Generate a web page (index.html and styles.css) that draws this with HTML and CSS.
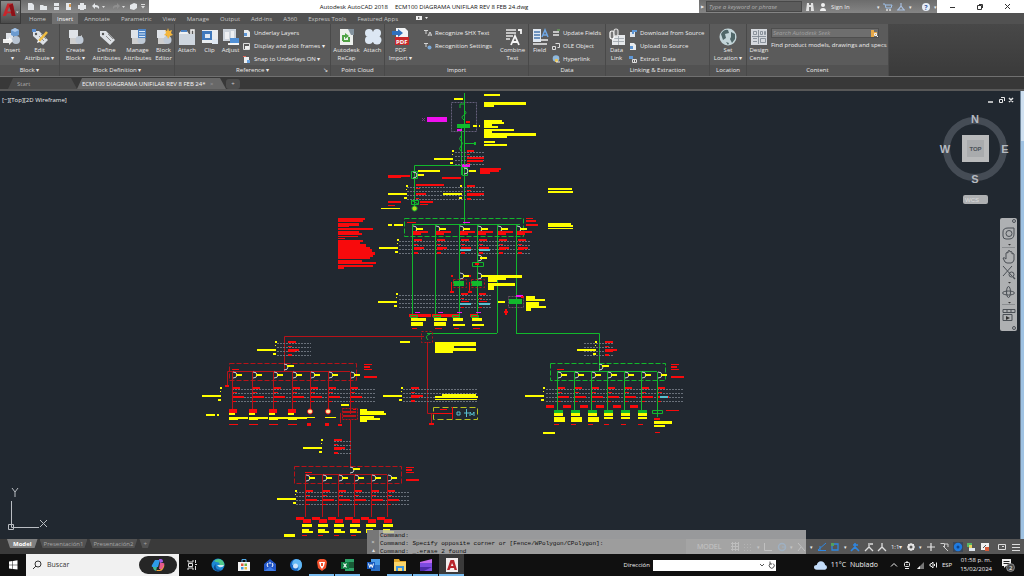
FILE: index.html
```html
<!DOCTYPE html>
<html lang="es">
<head>
<meta charset="utf-8">
<title>Autodesk AutoCAD 2018 - ECM100 DIAGRAMA UNIFILAR REV 8 FEB 24.dwg</title>
<link rel="stylesheet" href="styles.css">
</head>
<body>
<svg class="defs" aria-hidden="true">
  <symbol id="i-insert" viewBox="0 0 18 18"><path fill="#dfe3e8" d="M3 5h7v7H3z"/><path fill="#6b9bd0" d="M8 2l4-2 4 2v5l-4 2-4-2z"/><path fill="#a9c6e8" d="M8 2l4 2 4-2-4-2z"/><circle cx="13" cy="12" r="4" fill="#b9c4d2"/><path fill="#fff" d="M0 11h6V9l4 4-4 4v-2H0z" opacity=".9"/></symbol>
  <symbol id="i-tag" viewBox="0 0 18 18"><path fill="#dde1e6" d="M2 3l6 0 9 9-5 5L2 8z"/><circle cx="5" cy="6" r="1.2" fill="#555"/><path stroke="#777" stroke-width=".8" d="M8 8l5 5M10 6l5 5"/></symbol>
  <symbol id="i-edit" viewBox="0 0 18 18"><use href="#i-tag"/><path stroke="#f0bd42" stroke-width="2.6" d="M16 4l-8 9"/><path fill="#fff" d="M7 12l2 2-3 1z"/><path fill="#5b8ed0" d="M1 1h4v3H1z"/></symbol>
  <symbol id="i-block" viewBox="0 0 18 18"><path fill="#dfe3e8" d="M2 2h9v8H2z"/><path fill="#fff" d="M3 10h8l4-3v6l-4 3H3z" opacity=".7"/><circle cx="12.500" cy="12" r="4" fill="#c0cad6"/></symbol>
  <symbol id="i-manage" viewBox="0 0 18 18"><use href="#i-block"/><path fill="#4d83c4" d="M9 1h8v9H9z"/><path stroke="#dbe9f8" d="M10 3.500h6M10 6h6M10 8.500h6"/></symbol>
  <symbol id="i-editor" viewBox="0 0 18 18"><use href="#i-block"/><path fill="#f4b63d" d="M13 0l1 3 3-1-1 3 2 2-3 1-2 3-1-3-3-1 2-2-1-3 2 1z"/></symbol>
  <symbol id="i-attach" viewBox="0 0 18 18"><path fill="#ced6df" d="M1 6h16v11H1z"/><path fill="#eff1f3" d="M3 3h6l2 3H1V5z"/><path fill="#4d83c4" d="M3 2h6v2H3z"/><path stroke="#f4f4f4" stroke-width="1.500" fill="none" d="M13 6V2h3v4"/></symbol>
  <symbol id="i-clip" viewBox="0 0 18 18"><path fill="#e9edf1" d="M1 2h16v13H1z"/><path fill="#3f79bd" d="M1 3h10v9H1z"/><path fill="#dfe8f2" d="M4 6h5v4H4zM11 11h6v5h-6z"/></symbol>
  <symbol id="i-adjust" viewBox="0 0 18 18"><path fill="#cdd4dc" d="M1 1h13v12H1z"/><path fill="#eef0f3" d="M3 4h4v7H3zM9 3h3v8H9z"/><path fill="#5190d6" d="M8 10h9v5H8z"/><path fill="#f4f4f4" d="M6 15h11v2H6z"/></symbol>
  <symbol id="i-recap" viewBox="0 0 18 18"><path fill="#edf0ed" d="M2 1h9l4 4v12H2z"/><path fill="#83929d" d="M10 1h6v6h-3z"/><path fill="none" stroke="#51a345" stroke-width="2" d="M5 13h6V9M5 13V8h3"/><path fill="#51a345" d="M7 5l4 3-4 3z"/></symbol>
  <symbol id="i-cloud" viewBox="0 0 18 18"><g fill="#dce7f3"><circle cx="5" cy="5" r="4"/><circle cx="13" cy="5" r="4"/><circle cx="5" cy="12" r="4"/><circle cx="13" cy="12" r="4.500"/><path d="M4 4h10v10H4z"/></g></symbol>
  <symbol id="i-pdf" viewBox="0 0 18 18"><path fill="#f1f3f5" d="M4 0h9l3 3v9H4z"/><path fill="#c8282a" d="M3 9h14v8H3z"/><path fill="#2f70bd" d="M0 3h6V1l5 4-5 4V7H0z"/><text x="4" y="15.500" font-size="6" font-weight="700" fill="#fff">PDF</text></symbol>
  <symbol id="i-combine" viewBox="0 0 18 18"><path stroke="#e7e7e7" stroke-width="1.600" d="M2 2h10M2 5h10M2 8h7M2 11h4"/><path stroke="#f5f5f5" stroke-width="1.800" fill="none" d="M7 17l4-9 4 9M8.500 14h5M14 2h3v4"/></symbol>
  <symbol id="i-field" viewBox="0 0 18 18"><path fill="#e1e9f2" d="M2 1h8v13H2z"/><path stroke="#4877ad" stroke-width="1.400" d="M3 4h6M3 7h6M3 10h6"/><path stroke="#6fa8e6" stroke-width="1.500" fill="none" d="M11 9l3-7 3 7M12 7h4"/><path stroke="#eee" stroke-width="1.500" d="M2 16h14M10 12h7"/></symbol>
  <symbol id="i-link" viewBox="0 0 18 18"><path fill="#e6e9ec" d="M4 7h13v10H4z"/><path stroke="#9aa2aa" stroke-width=".8" d="M5 10.500h11M5 13.500h11M10.500 8v9"/><rect x="2" y="3" width="4" height="8" rx="2" fill="#777" stroke="#fff" stroke-width="1.200"/><rect x="6" y="1" width="4" height="7" rx="2" fill="#777" stroke="#ddd" stroke-width="1.200"/></symbol>
  <symbol id="i-globe" viewBox="0 0 18 18"><circle cx="9" cy="9" r="8.500" fill="#c3d5d9"/><path fill="#4f6668" d="M2 6q3-5 7-4l1 3-4 1 1 4-3 2zM12 4l4 2v5l-3 4-2-4 1-2zM7 14l3 1-1 2z"/></symbol>
  <symbol id="i-center" viewBox="0 0 18 18"><path fill="#d5d9de" d="M1 1h16v16H1z"/><path fill="none" stroke="#77818b" stroke-width=".8" d="M3.500 3.500h3v3h-3zM8.500 2v14M10.500 3.500h2v3h-2zM14.500 3.500h1v3h-1zM3 10.500h4M3 13.500h4M10.500 10.500h5v4h-5zM2 8.500h14"/></symbol>
  <symbol id="s-page" viewBox="0 0 8 8"><path fill="#e8ebee" d="M1 1h4l2 2v5H1z"/><path fill="#5d96d6" d="M1 4h3v3H1z"/></symbol>
  <symbol id="s-frame" viewBox="0 0 8 8"><path fill="none" stroke="#dedede" d="M.5 1.500h6v6h-6z"/><path fill="#eee" d="M2 4h4v3H2z"/></symbol>
  <symbol id="s-snap" viewBox="0 0 8 8"><path fill="#eceff1" d="M1 2h5v6H1z"/><path fill="#6aa3e0" d="M4 5h3v3H4z"/><path stroke="#e36a5c" d="M0 1.500h3"/></symbol>
  <symbol id="s-shx" viewBox="0 0 8 8"><path fill="none" stroke="#d4d4d4" d="M0 1.500h4M2 2v3M4 7l2-4 2 4M5 6h2"/></symbol>
  <symbol id="s-gearpage" viewBox="0 0 8 8"><path fill="none" stroke="#d4d4d4" d="M0 1.500h4M2 2v3"/><circle cx="5.500" cy="5.500" r="2" fill="#7aa9d9"/></symbol>
  <symbol id="s-lines" viewBox="0 0 8 8"><path stroke="#e8e8e8" stroke-width="1.300" d="M1 3h6M1 6h6"/><path stroke="#6ebd5b" d="M5 1h3"/></symbol>
  <symbol id="s-ole" viewBox="0 0 8 8"><path fill="none" stroke="#ddd" d="M.5 4.500h3v3h-3zM3.500 1.500h4v4h-2"/></symbol>
  <symbol id="s-hyper" viewBox="0 0 8 8"><circle cx="4" cy="3.500" r="3.300" fill="#8fb8dc"/><path fill="#e6c35b" d="M3 4h3v3H3z"/><path stroke="#eee" d="M4 7l4 0"/></symbol>
  <symbol id="s-down" viewBox="0 0 8 8"><path fill="#dfe5eb" d="M1 3h5v5H1z"/><path fill="#5d96d6" d="M3 1h5v2H5v2H3z"/></symbol>
  <symbol id="s-extract" viewBox="0 0 8 8"><path fill="#5d96d6" d="M0 1h4v3H0z"/><path fill="none" stroke="#ddd" d="M3.500 4.500h4v3h-4zM5.500 4v4"/></symbol>
</svg>

<header class="top">
  <button class="logo" aria-label="Menú de la aplicación">
    <svg viewBox="0 0 21 21"><path fill="#c8262c" d="M7 1h6l3 14h-4l-1-3H7l-2 3H2z"/><path fill="#8d1218" d="M13 1l3 14h-4L9 3z"/><path fill="#707070" d="M9 5l2 5H7z"/><path fill="#ddd" d="M16.500 10h3L18 12z"/></svg>
  </button>
  <div class="titlebar">
    <div class="quick">
      <svg viewBox="0 0 128 13"><g fill="#e4e7ea"><path d="M7 3h4l2 2v5H7zM19 5h3l1 1h3v4h-7zM33 3h5v3h-5zM33 7h5v3h-5zM45 3h5v7h-5zM57 5h8v4h-8zM59 3h4v7h-4zM71 6l3-3v2q5 0 4 4-1-2-4-2v2z"/><path d="M109 5l4-2 3 1v4l-3 2-4-1z"/></g><path fill="#d79a52" d="M48 4h2v3h-2z"/><path fill="#8f8f8f" d="M99 6l-3-3v2q-5 0-4 4 1-2 4-2v2z"/><path fill="#ddd" d="M81 6h3l-1.500 2zM101 6h3l-1.500 2zM120 6h4l-2 2.500zM120 4h4v1h-4z"/></svg>
    </div>
    <h1 class="title"><span>Autodesk AutoCAD 2018</span><span>ECM100 DIAGRAMA UNIFILAR REV 8 FEB 24.dwg</span></h1>
    <div class="infocenter">
      <span class="tri">▶</span>
      <input class="keyword" type="text" placeholder="Type a keyword or phrase" aria-label="Type a keyword or phrase">
      <svg class="ic10" viewBox="0 0 10 10"><path fill="#e3e3e3" d="M2 1h2v2h2V1h2l1 8H6V5H4v4H1z"/></svg>
      <svg class="ic10" viewBox="0 0 10 10"><circle cx="5" cy="3" r="2" fill="#f1f1f1"/><path fill="#f1f1f1" d="M2 9q0-3 3-3t3 3z"/></svg>
      <button class="signin">Sign In</button>
      <span class="caret">▾</span>
      <svg class="ic10" viewBox="0 0 10 10"><path fill="none" stroke="#9fc1ea" d="M0 2h2l1 4h5l1-3H3"/><circle cx="4" cy="8" r="1" fill="#ddd"/><circle cx="7" cy="8" r="1" fill="#ddd"/></svg>
      <svg class="ic10" viewBox="0 0 10 10"><path fill="none" stroke="#a8bfe0" stroke-width="1.200" d="M5 1v3L2 8h6L5 4M1 8h2M7 8h2"/></svg>
      <span class="caret">▾</span>
      <svg class="ic10 help" viewBox="0 0 10 10"><circle cx="5" cy="5" r="4" fill="#e8eef8"/><text x="3.300" y="7.500" font-size="7" font-weight="700" fill="#3a5f9e">?</text></svg>
      <span class="caret">▾</span>
    </div>
    <div class="wincontrols">
      <button aria-label="Minimizar"><svg viewBox="0 0 8 8"><path stroke="#333" d="M1 4.500h5"/></svg></button>
      <button aria-label="Restaurar"><svg viewBox="0 0 8 8"><path fill="none" stroke="#333" d="M1.500 2.500h4v4h-4zM3 1.500h3.500V5"/></svg></button>
      <button aria-label="Cerrar"><svg viewBox="0 0 8 8"><path stroke="#333" d="M1 1l5 5M6 1L1 6"/></svg></button>
    </div>
  </div>
  <nav class="menu">
    <button>Home</button><button class="on">Insert</button><button>Annotate</button><button>Parametric</button><button>View</button><button>Manage</button><button>Output</button><button>Add-ins</button><button>A360</button><button>Express Tools</button><button>Featured Apps</button>
    <svg class="menu-more" viewBox="0 0 14 6"><path fill="#eee" d="M1 1h6v4H1zM10 2h3l-1.500 2z"/><path fill="#444" d="M3 2l2 1-2 1z"/></svg>
  </nav>
</header>

<section class="ribbon">
  <div class="panel"><div class="tools">
    <button class="big mid"><svg><use href="#i-insert"/></svg>Insert<br>▾</button>
    <button class="big wide"><svg><use href="#i-edit"/></svg>Edit<br>Attribute ▾</button>
  </div><h2>Block ▾</h2></div>
  <div class="panel"><div class="tools">
    <button class="big wide"><svg><use href="#i-block"/></svg>Create<br>Block ▾</button>
    <button class="big wide"><svg><use href="#i-tag"/></svg>Define<br>Attributes</button>
    <button class="big wide"><svg><use href="#i-manage"/></svg>Manage<br>Attributes</button>
    <button class="big narrow"><svg><use href="#i-editor"/></svg>Block<br>Editor</button>
  </div><h2>Block Definition ▾</h2></div>
  <div class="panel"><div class="tools">
    <button class="big mid"><svg><use href="#i-attach"/></svg>Attach</button>
    <button class="big narrow"><svg><use href="#i-clip"/></svg>Clip</button>
    <button class="big narrow"><svg><use href="#i-adjust"/></svg>Adjust</button>
    <div class="list">
      <button><svg><use href="#s-page"/></svg>Underlay Layers</button>
      <button><svg><use href="#s-frame"/></svg>Display and plot frames ▾</button>
      <button><svg><use href="#s-snap"/></svg>Snap to Underlays ON ▾</button>
    </div>
  </div><h2>Reference ▾<span class="launcher">↘</span></h2></div>
  <div class="panel"><div class="tools">
    <button class="big wide"><svg><use href="#i-recap"/></svg>Autodesk<br>ReCap</button>
    <button class="big narrow"><svg><use href="#i-cloud"/></svg>Attach</button>
  </div><h2>Point Cloud</h2></div>
  <div class="panel"><div class="tools">
    <button class="big wide"><svg><use href="#i-pdf"/></svg>PDF<br>Import ▾</button>
    <div class="list inset">
      <button><svg><use href="#s-shx"/></svg>Recognize SHX Text</button>
      <button><svg><use href="#s-gearpage"/></svg>Recognition Settings</button>
    </div>
    <button class="big wide end"><svg><use href="#i-combine"/></svg>Combine<br>Text</button>
  </div><h2>Import</h2></div>
  <div class="panel"><div class="tools">
    <button class="big narrow"><svg><use href="#i-field"/></svg>Field</button>
    <div class="list">
      <button><svg><use href="#s-lines"/></svg>Update Fields</button>
      <button><svg><use href="#s-ole"/></svg>OLE Object</button>
      <button><svg><use href="#s-hyper"/></svg>Hyperlink</button>
    </div>
  </div><h2>Data</h2></div>
  <div class="panel"><div class="tools">
    <button class="big narrow"><svg><use href="#i-link"/></svg>Data<br>Link</button>
    <div class="list">
      <button><svg><use href="#s-down"/></svg>Download from Source</button>
      <button><svg><use href="#s-page"/></svg>Upload to Source</button>
      <button><svg><use href="#s-extract"/></svg>Extract &nbsp;Data</button>
    </div>
  </div><h2>Linking &amp; Extraction</h2></div>
  <div class="panel"><div class="tools">
    <button class="big fill"><svg><use href="#i-globe"/></svg>Set<br>Location ▾</button>
  </div><h2>Location</h2></div>
  <div class="panel"><div class="tools">
    <button class="big mid"><svg><use href="#i-center"/></svg>Design<br>Center</button>
    <div class="seek">
      <label class="seekbox"><input type="text" placeholder="Search Autodesk Seek" aria-label="Search Autodesk Seek"><svg viewBox="0 0 8 8"><path fill="#e8a948" d="M1 1h3v7H1zM4 3h3v3H4z"/><path stroke="#eee" fill="none" d="M4.500 4.500h2v2h-2zM6 6l2 2"/></svg></label>
      <p>Find product models, drawings and specs</p>
    </div>
  </div><h2>Content</h2></div>
  <div class="rest"></div>
</section>

<nav class="files">
  <button class="file">Start</button>
  <button class="file on">ECM100 DIAGRAMA UNIFILAR REV 8 FEB 24* <span>×</span></button>
  <button class="newfile" aria-label="Nuevo">+</button>
</nav>

<main class="work">
  <svg id="drawing" class="drawing" viewBox="0 91 1020 448" preserveAspectRatio="xMinYMin meet" role="img" aria-label="Diagrama unifilar"></svg>
  <div class="scroll"></div>
  <div class="viewlabel">[−][Top][2D Wireframe]</div>
  <svg class="doccontrols" viewBox="0 0 28 8"><path fill="none" stroke="#e8e8e8" stroke-width="1.500" d="M1 6h5M22 2l4 4M26 2l-4 4"/><path fill="none" stroke="#e8e8e8" d="M12.500 3.500h3v3h-3zM14 1.500h3.500V5"/></svg>
  <svg class="cube" viewBox="0 0 72 90">
    <circle cx="36" cy="36" r="28.500" fill="none" stroke="#454c55" stroke-width="7"/>
    <g class="compass"><text x="36" y="10">N</text><text x="36" y="70">S</text><text x="6" y="40">W</text><text x="66" y="40">E</text></g>
    <rect x="23" y="22" width="27" height="27" fill="#b9babb"/><rect x="28" y="27" width="17" height="17" fill="#a9abad"/>
    <text class="face" x="36.500" y="38">TOP</text>
    <rect x="24" y="82" width="25" height="9" rx="2" fill="#aeb0b2"/><text class="wcs" x="33" y="89">WCS</text>
  </svg>
  <svg class="navbar" viewBox="0 0 17 113"><rect width="17" height="113" rx="2" fill="#aeb0b2"/><g fill="none" stroke="#4a4f55"><circle cx="14" cy="3" r="1.500"/><circle cx="14" cy="110" r="1.500"/><path d="M3 18V14q0-4 5-4h6v6q0 5-5 5H6q-3 0-3-3z"/><circle cx="9" cy="15.500" r="3"/><path stroke="#8b8e91" d="M2 29.500h13M2 86.500h13"/><path d="M5 44l-2-4q1-1 3 1v-6q1-1 2 0v-2q1-1 2 0v1q1-1 2 0v2q1-1 2 0v6q-1 3-3 3H7z"/><path d="M3 48l9 10M12 48L3 58"/><circle cx="11.500" cy="56.500" r="2.500"/><path stroke-width="1.400" d="M13 59l2 2"/><ellipse cx="8.500" cy="75" rx="6" ry="2"/><ellipse cx="8.500" cy="74" rx="2" ry="5.500"/><path d="M3 91.500h12v3H3zM7 91v4M11 91v4M3 96.500h9v6H3z"/></g><path fill="#333" d="M8 26h3l-1.500 1.500zM8 64h3l-1.500 1.500zM8 84h3l-1.500 1.500zM6 98l4 2-4 2z"/></svg>
  <svg class="ucs" viewBox="0 0 44 44"><g fill="none" stroke="#b9bdc2"><path d="M7.500 14v26.500H35M4.500 37.500h5v5h-5zM8 1l3 4 3-4M11 5v5M36 33l7 7M43 33l-7 7"/></g></svg>
  <div class="command">
    <div class="grip"><span>×</span><span>▴</span></div>
    <pre>Command:
Command: Specify opposite corner or [Fence/WPolygon/CPolygon]:
Command: _.erase 2 found</pre>
  </div>
</main>

<footer class="status">
  <nav class="layouts"><button class="on">Model</button><button>Presentación1</button><button>Presentación2</button><button>+</button></nav>
  <div class="modes">
    <span class="model">MODEL</span>
    <svg viewBox="0 0 10 10"><path stroke="#c8c8c8" fill="none" d="M1 1.500h8M1 4.500h8M1 7.500h8M2.500 0v9M5.500 0v9M8.500 0v9"/></svg>
    <svg viewBox="0 0 10 10"><path stroke="#999" stroke-dasharray="1 2" d="M1 2.500h8M1 5.500h8M1 8.500h8"/></svg>
    <span class="caret">▾</span>
    <svg viewBox="0 0 10 10"><path stroke="#d5d5d5" fill="none" d="M1.500 1v7.500H9"/></svg>
    <svg viewBox="0 0 10 10"><circle cx="5" cy="5" r="3.500" fill="none" stroke="#3f8fe0" stroke-width="1.500"/><path stroke="#3f8fe0" d="M5 5h4"/></svg>
    <span class="caret">▾</span>
    <svg viewBox="0 0 10 10"><path stroke="#d5d5d5" fill="none" d="M1 1l7 8M1 9l3-4"/></svg>
    <span class="caret">▾</span>
    <svg viewBox="0 0 10 10"><path stroke="#2f86e0" fill="none" d="M1 8l8-7M1 8.500h8M3 4v4"/></svg>
    <svg viewBox="0 0 10 10"><path stroke="#2f86e0" stroke-width="1.300" fill="none" d="M2 2h6v6H2z"/><path fill="#50a060" d="M1 1h3v3H1z"/></svg>
    <span class="caret">▾</span>
    <svg viewBox="0 0 10 10"><path stroke="#2f86e0" stroke-width="1.600" fill="none" d="M1 9l4-4 4 4M5 5V1M3 3h5"/></svg>
    <svg viewBox="0 0 10 10"><path stroke="#ddd" stroke-width="1.300" fill="none" d="M1 9l4-4 4 4M5 5V1M6 2h3"/></svg>
    <svg viewBox="0 0 10 10"><path stroke="#ddd" stroke-width="1.300" fill="none" d="M1 9l4-4 4 4M5 5V1"/></svg>
    <span>1:1▾</span>
    <svg viewBox="0 0 10 10"><circle cx="5" cy="5" r="2.500" fill="none" stroke="#e4e4e4" stroke-width="2"/><path stroke="#e4e4e4" d="M5 1v1M5 8v1M1 5h1M8 5h1M2 2l1 1M7 7l1 1M8 2L7 3M2 8l1-1"/></svg>
    <span class="caret">▾</span>
    <svg viewBox="0 0 10 10"><path stroke="#e4e4e4" stroke-width="1.200" d="M5 1v8M1 5h8"/></svg>
    <svg viewBox="0 0 10 10"><path stroke="#ccc" fill="none" d="M1.500 1.500h4v4M4 4l5 5M6 2h3v3"/></svg>
    <svg viewBox="0 0 10 10"><path fill="#3b4656" d="M0 0h10v10H0z"/><circle cx="5" cy="5" r="4.200" fill="#1f7be0"/><circle cx="5" cy="5" r="1.500" fill="#0d4690"/></svg>
    <svg viewBox="0 0 10 10"><path fill="#58b368" d="M1 1h5v4H1z"/><path fill="#e6d35a" d="M3 3h3v3H3z"/><path fill="#dfe6ee" d="M3 6h6v3H3z"/></svg>
    <svg viewBox="0 0 10 10"><path fill="#f0f0f0" d="M1 1h8v7H1z"/><path fill="#d55a3a" d="M5 5h4v4H5z"/><path stroke="#555" d="M3 6l3-3"/></svg>
    <svg class="gap" viewBox="0 0 10 10"><path fill="none" stroke="#ddd" d="M1.500 2.500h7v5h-7zM5 4.500h2"/></svg>
    <svg viewBox="0 0 10 10"><path stroke="#ddd" d="M1 2.500h8M1 5.500h8M1 8.500h8"/></svg>
  </div>
</footer>

<footer class="taskbar">
  <button class="start" aria-label="Inicio"><svg viewBox="0 0 10 10"><path fill="#fff" d="M1 1.500l3.500-.5v3.700H1zM5 1l4.500-.7v4.400H5zM1 5.200h3.500v3.700L1 8.400zM5 5.200h4.500v4.400L5 9z"/></svg></button>
  <label class="find"><svg viewBox="0 0 10 10"><circle cx="6" cy="4" r="3" fill="none" stroke="#333"/><path stroke="#333" d="M4 6L1 9"/></svg><input type="text" placeholder="Buscar" aria-label="Buscar">
    <span class="copilot"><svg viewBox="0 0 14 14"><path fill="#2d9be8" d="M4 2h5L7 9H2q-2 0-1-2z"/><path fill="#a45ee8" d="M8 1h2q2 0 2 3L9 5z"/><path fill="#f1a23e" d="M5 12h4l3-6q2 0 1 3l-1 2q-1 2-3 2H6z"/><path fill="#e85a8c" d="M9 5h3q2 0 1 2l-2 4H8z"/><path fill="#45b58a" d="M2 9h4l-1 4q-2 0-3-3z"/></svg></span></label>
  <div class="apps">
    <button aria-label="Vista de tareas"><svg viewBox="0 0 14 14"><path fill="none" stroke="#ddd" d="M3 2v2h5V2M3 12v-2h5v2M3.500 5.500h4v3h-4zM10.500 2v3M10.500 8v4M10 6.500h2"/></svg></button>
    <button aria-label="Edge"><svg viewBox="0 0 14 14"><circle cx="7" cy="7" r="6.500" fill="#1d87d3"/><path fill="#4fc98b" d="M3 3q5-4 9 0 2 3 1 5H8q2-4-3-4z"/><path fill="#0d4f98" d="M5 6q-2 6 6 6-5 3-8-1-1-3 2-5z"/><path fill="#cfeaf3" d="M6 7h7q-1 3-5 2z"/></svg></button>
    <button aria-label="Store"><svg viewBox="0 0 14 14"><path fill="#f3f3f3" d="M1 4h12v9H1z"/><path fill="none" stroke="#52a9e8" d="M5 4V1.500h4V4"/><path fill="#e0533a" d="M4 5.500h2.500V8H4z"/><path fill="#6fb544" d="M7.500 5.500H10V8H7.500z"/><path fill="#3a9be0" d="M4 9h2.500v2.500H4z"/><path fill="#e8b93a" d="M7.500 9H10v2.500H7.500z"/></svg></button>
    <button aria-label="Correo"><svg viewBox="0 0 14 14"><path fill="#2356c7" d="M1 6l6-5 6 5v7H1z"/><path fill="#3f7ce8" d="M1 13l6-4 6 4z"/><path stroke="#fff" fill="none" d="M5 5q-2 2 0 4M9 5q2 2 0 4M6 5h2"/></svg></button>
    <button aria-label="Thunderbird"><svg viewBox="0 0 14 14"><circle cx="7" cy="7" r="6" fill="#1667c4"/><path fill="#63b9f5" d="M7 1q6 0 6 6 0 5-5 6 3-4 0-6-3-1-5 0 0-5 4-6z"/><circle cx="6.500" cy="8" r="2.500" fill="#cfe5fa"/></svg></button>
    <button class="run" aria-label="Brave"><svg viewBox="0 0 14 14"><path fill="#f4522d" d="M3 2l2-1h4l2 1 1 2-1 6-4 3-4-3-1-6z"/><path fill="#fff" d="M4 4h6l-1 4-2 3-2-3z"/><path fill="#f4522d" d="M6 5h2v3H6z"/></svg></button>
    <button class="run" aria-label="Excel"><svg viewBox="0 0 14 14"><path fill="#2ea36a" d="M4 1h9v12H4z"/><path fill="#185c37" d="M8 4h5v6H8z"/><path fill="#107c41" d="M0 4h8v7H0z"/><path stroke="#fff" stroke-width="1.200" d="M2.500 5.500l3 4M5.500 5.500l-3 4"/></svg></button>
    <button aria-label="Word"><svg viewBox="0 0 14 14"><path fill="#4a9be8" d="M4 1h9v12H4z"/><path fill="#2b6fc4" d="M4 7h9v6H4z"/><path fill="#185abd" d="M0 4h8v7H0z"/><path stroke="#fff" fill="none" d="M1.500 5.500l1.200 4 1.300-3 1.300 3 1.200-4"/></svg></button>
    <button class="run" aria-label="Explorador"><svg viewBox="0 0 14 14"><path fill="#e3a92c" d="M1 1h5l1 2h6v4H1z"/><path fill="#fbd66b" d="M1 4h12v9H1z"/><path fill="#3f96dc" d="M3 8h8v5H9v-3H5v3H3z"/></svg></button>
    <button class="run" aria-label="Clipchamp"><svg viewBox="0 0 14 14"><path fill="#7c4be0" d="M1 5h12v8H1z"/><path fill="#c46bf0" d="M1 4l12-3v4H1z"/><path fill="#4d2aa8" d="M1 9h12l-8 4H1z"/></svg></button>
    <button class="run active" aria-label="AutoCAD"><svg viewBox="0 0 14 14"><path fill="#f3eeee" d="M1 0h12v14H1z"/><path fill="#b8242b" d="M5.500 2h3.500l3 10H9.500L9 10H5.500l-1 2H2zM7 5L6 8h2.500z"/></svg></button>
  </div>
  <label class="address"><span>Dirección</span><span class="addressbox"><input type="text" aria-label="Dirección"><svg viewBox="0 0 18 8"><path fill="none" stroke="#555" d="M2 3l2 2 2-2M15 2.500a2.500 2.500 0 1 1-2.500 0M12 .5v2.500h2"/></svg></span></label>
  <div class="weather"><svg viewBox="0 0 14 9"><path fill="#c3dcf8" d="M3 9q-3 0-3-2.500T3 4q1-4 4.500-4T12 4q2 .5 2 2.500T12 9z"/></svg>11°C &nbsp;Nublado</div>
  <div class="tray">
    <svg viewBox="0 0 8 8"><path fill="none" stroke="#eee" d="M1 5.500l3-3 3 3"/></svg>
    <svg viewBox="0 0 8 8"><rect x="1.500" y="1.500" width="5" height="4" rx="1" fill="none" stroke="#eee"/><path stroke="#eee" d="M2 7.500h4M4 0v1M4 3v1"/></svg>
    <svg viewBox="0 0 8 8"><path fill="#777" d="M8 1v7H1z"/><path fill="#eee" d="M4 5v3H1z"/></svg>
    <svg viewBox="0 0 8 8"><path fill="none" stroke="#eee" d="M1 3h1l2-2v6L2 5H1zM5.500 3v2M7.500 1.500v5"/></svg>
    <span>ESP</span>
  </div>
  <div class="clock">01:58 p. m.<br>15/02/2024</div>
  <button class="notif" aria-label="Notificaciones"><svg viewBox="0 0 14 14"><path fill="#f1f1f1" d="M1 1h9v7H5l-2 2V8H1z"/><path stroke="#222" d="M2.500 3.500h6M2.500 5.500h6"/><circle cx="9.500" cy="9.500" r="4" fill="#4a4a4a" stroke="#bbb" stroke-width=".6"/><text x="8" y="11.800" font-size="6" fill="#fff">2</text></svg></button>
</footer>
<script src="drawing.js"></script>
</body>
</html>
```
FILE: styles.css
```css
* { box-sizing: border-box; }
body {
  margin: 0;
  height: 100vh;
  display: flex;
  flex-direction: column;
  overflow: hidden;
  background: #3a3a3a;
  color: #ececec;
  font: 6px/8px "Open Sans", "Noto Sans", sans-serif;
}
button, input { font: inherit; color: inherit; border: 0; padding: 0; margin: 0; background: none; }
input { min-width: 0; outline: 0; }
h1, h2, p, pre { margin: 0; font-size: inherit; font-weight: 400; }
svg { flex: none; display: block; }
.defs { display: none; }

.top { display: grid; grid-template-columns: 21px 1fr; grid-template-rows: 13px 11px; background: #515151; }
.logo { grid-row: 1 / 3; background: linear-gradient(#8a8a8a, #4a4a4a); border: 1px solid #3a3a3a; }
.logo svg { width: 100%; height: 100%; }
.titlebar { display: flex; background: #fff; }
.quick { background: linear-gradient(#6c6c6c, #8b8b8b); }
.quick svg { width: 128px; height: 13px; }
.title { flex: 1; display: flex; justify-content: center; align-items: center; gap: 7px; color: #111; }
.infocenter { display: flex; align-items: center; width: 238px; background: linear-gradient(#6c6c6c, #858585); }
.tri { width: 7px; font-size: 4px; text-align: center; }
.keyword { width: 96px; height: 11px; background: #5c5c5c; border: 1px solid #484848; padding-left: 2px; font-style: italic; }
.keyword::placeholder { color: #b0b0b0; }
.ic10 { width: 10px; height: 10px; margin-left: 3px; }
.signin { margin-left: 3px; margin-right: 24px; }
.caret { font-size: 5px; margin-left: 3px; }
.help { margin-left: 9px; }
.wincontrols { display: flex; width: 87px; align-items: center; justify-content: space-around; padding: 0 2px; }
.wincontrols svg { width: 8px; height: 8px; }
.menu { display: flex; align-items: stretch; gap: 1px; padding-left: 3px; color: #c8c8c8; }
.menu button { padding: 0 5px; }
.menu .on { background: #707070; color: #fff; }
.menu-more { width: 14px; height: 6px; margin: 2px 11px; }

.ribbon {
  display: grid;
  grid-template-columns: 60fr 115fr 156fr 54fr 144fr 77fr 104fr 37fr 142fr 135fr;
  height: 53px;
  background: #5b5b5b;
  border-bottom: 1px solid #707070;
}
.panel { display: flex; flex-direction: column; min-width: 0; border-right: 1px solid #494949; }
.panel h2 { height: 11px; line-height: 10px; text-align: center; background: #525252; position: relative; }
.launcher { position: absolute; right: 2px; }
.tools { flex: 1; display: flex; min-width: 0; padding-top: 4px; white-space: nowrap; }
.big { flex: none; align-self: flex-start; text-align: center; line-height: 8px; }
.big svg { width: 18px; height: 18px; margin: 0 auto; }
.narrow { width: 21px; }
.mid { width: 24px; }
.wide { width: 31px; }
.fill { width: 100%; }
.end { margin-left: auto; }
.list { display: flex; flex-direction: column; gap: 5px; padding: 1px 0 0 2px; }
.inset { padding-left: 8px; }
.list button { display: flex; align-items: center; gap: 3px; height: 8px; }
.list svg { width: 8px; height: 8px; }
.seek { flex: 1; display: flex; flex-direction: column; gap: 3px; min-width: 0; }
.seekbox { display: flex; align-items: center; width: 108px; height: 10px; background: #6e6e6e; border: 1px solid #4e4e4e; }
.seekbox input { flex: 1; font-style: italic; padding-left: 1px; }
.seekbox input::placeholder { color: #a0a0a0; }
.seekbox svg { width: 8px; height: 8px; }
.rest { background: linear-gradient(#484848, #3a3a3a); }

.files { display: flex; align-items: flex-end; height: 14px; padding-left: 8px; background: #383838; border-bottom: 2px solid #585858; }
.file { height: 11px; width: 69px; padding-left: 9px; text-align: left; background: #4b4b4b; color: #a8a8a8; clip-path: polygon(5px 0, calc(100% - 6px) 0, 100% 100%, 0 100%); }
.file.on { width: 149px; padding-left: 5px; background: #686868; color: #f8f8f8; white-space: nowrap; }
.file span { margin-left: 3px; color: #999; }
.newfile { width: 14px; height: 10px; background: #4d4d4d; border-radius: 3px; color: #ccc; }

.work { position: relative; flex: 1; min-height: 0; background: #212830; }
.drawing { width: 100%; height: 100%; }
.scroll { position: absolute; top: 0; right: 0; bottom: 0; width: 4px; background: linear-gradient(#cfe0f0 50px, #9fc2e2 50px); border-left: 1px solid #6f8498; }
.viewlabel { position: absolute; left: 2px; top: 5px; }
.doccontrols { position: absolute; right: 9px; top: 5px; width: 28px; height: 8px; }
.cube { position: absolute; right: 13px; top: 22px; width: 72px; height: 90px; overflow: visible; text-anchor: middle; }
.compass { font: 700 11px "Liberation Sans", sans-serif; fill: #b5bac0; }
.face { font: 700 6px "Liberation Sans", sans-serif; fill: #4c5258; }
.wcs { font: 6px "Liberation Sans", sans-serif; fill: #dcdcdc; }
.navbar { position: absolute; right: 7px; top: 127px; width: 17px; height: 113px; }
.ucs { position: absolute; left: 4px; bottom: 8px; width: 44px; height: 44px; }
.command { position: absolute; left: 367px; bottom: -15px; width: 439px; height: 24px; display: flex; overflow: hidden; background: rgba(186, 186, 186, .78); color: #111; z-index: 2; }
.command pre { font: 6px/8px "Liberation Mono", monospace; padding: 2px 0 0 1px; }
.grip { width: 12px; background: #777; color: #ddd; display: flex; flex-direction: column; align-items: center; padding-top: 8px; }

.status { display: flex; justify-content: space-between; height: 15px; background: #3a3a3a; }
.layouts { display: flex; align-items: flex-start; gap: 2px; padding-left: 7px; color: #a5a5a5; }
.layouts button { height: 9px; padding: 0 4px; background: #525252; clip-path: polygon(0 0, 100% 0, calc(100% - 3px) 100%, 3px 100%); }
.layouts .on { background: #808080; color: #fff; font-weight: 700; padding: 0 6px; }
.modes { display: flex; align-items: center; justify-content: space-between; width: 338px; padding: 0 3px 0 11px; background: #565656; }
.modes svg { width: 10px; height: 10px; }
.modes .caret { margin: 0; }
.model { font-size: 7px; margin-right: 5px; }
.gap { margin-left: 4px; }

.taskbar { display: flex; align-items: stretch; height: 22px; background: #101010; color: #f2f2f2; }
.start { width: 26px; display: flex; align-items: center; justify-content: center; }
.start svg { width: 10px; height: 10px; }
.find { width: 153px; display: flex; align-items: center; padding: 0 2px 0 6px; gap: 5px; background: #f1f1f1; font-size: 7px; color: #444; }
.find > svg { width: 10px; height: 10px; }
.find input { flex: 1; }
.find input::placeholder { color: #333; }
.copilot { width: 38px; height: 18px; border-radius: 9px; background: #262626; display: flex; align-items: center; justify-content: center; }
.copilot svg { width: 14px; height: 14px; }
.apps { display: flex; gap: 1px; }
.apps button { width: 25px; display: flex; align-items: center; justify-content: center; border-bottom: 2px solid transparent; border-top: 2px solid transparent; }
.apps svg { width: 14px; height: 14px; }
.apps .run { border-bottom-color: #76b9ed; }
.apps .active { background: #3a3a3a; border-top-color: #3a3a3a; }
.address { display: flex; align-items: center; gap: 3px; margin-left: auto; font-size: 6px; padding-right: 38px; }
.addressbox { display: flex; align-items: center; width: 123px; height: 11px; background: #fff; color: #222; }
.addressbox input { flex: 1; }
.addressbox svg { width: 18px; height: 8px; }
.weather { display: flex; align-items: center; gap: 4px; font-size: 7px; margin-right: 12px; }
.weather svg { width: 13px; height: 9px; }
.tray { display: flex; align-items: center; gap: 5px; margin-right: 8px; }
.tray svg { width: 8px; height: 8px; }
.clock { align-self: center; text-align: center; line-height: 9px; }
.notif { width: 32px; display: flex; align-items: center; justify-content: center; }
.notif svg { width: 14px; height: 14px; }
```
FILE: drawing.js
```js
const svg = document.getElementById('drawing');
const NS = 'http://www.w3.org/2000/svg';
const Y = '#ffff00', R = '#f80a0c', G = '#12b82c', M = '#f010f0', C = '#58c0d0', D = '#6a717b', W = '#c9ccd2', DR = '#b81218';

function path(d, attrs) {
  const p = document.createElementNS(NS, 'path');
  p.setAttribute('d', d);
  for (const k in attrs) p.setAttribute(k, attrs[k]);
  svg.appendChild(p);
}
// Filled text-bars, each [x, y, width, height]
const bars = (color, list) =>
  path(list.map(([x, y, w, h]) => `M${x} ${y}h${w}v${h}h${-w}z`).join(''), { fill: color });
const line = (color, d, dash) =>
  path(d, { stroke: color, fill: 'none', ...(dash ? { 'stroke-dasharray': dash } : {}) });
const box = (color, x, y, w, h, dash) => line(color, `M${x + .5} ${y + .5}h${w}v${h}h${-w}z`, dash);
const breaker = (x, y) => line(W, `M${x} ${y - 3}q4 0 4 3t-4 3`);

// Four phase conductors with their yellow callout on the left
function phases(x1, x2, y, labelX) {
  for (let i = 0; i < 4; i++) line(D, `M${x1} ${y + i * 4 + .5}H${x2}`, '2 1');
  bars(Y, [[labelX + 18, y - 2, 2, 2], [labelX + 18, y + 2, 1, 1], [labelX, y + 6, 19, 2], [labelX + 16, y + 10, 3, 2]]);
}
const cable = (x, y, w = 12) =>
  bars(R, [[x, y - 2, 8, 2], [x, y + 3, 4, 1], [x, y + 6, w, 2], [x, y + 8, w - 4, 1], [x, y + 11, 4, 2]]);

// Incoming supply
box('#66607c', 451, 102, 25, 29, '2 1');
line(G, 'M464.5 93V224M461.500 128V175M464 143.500H475M464 165.500H414.500V207M460 108v-4h4M464 110q4 3 0 5t0 5');
line(G, 'M461 136q-3 3 0 5t0 5t0 5');
bars(G, [[457, 124, 13, 4], [474, 142, 2, 3]]);
bars(Y, [[454, 98, 9, 2], [484, 94, 16, 2], [484, 102, 42, 3], [484, 105, 10, 2], [484, 120, 18, 2], [484, 122, 20, 2],
  [484, 124, 8, 2], [484, 126, 14, 2], [484, 129, 30, 2], [484, 131, 8, 2], [484, 133, 52, 3], [484, 136, 23, 2],
  [484, 141, 11, 2], [484, 144, 23, 2], [473, 125, 4, 2], [479, 125, 1, 2]]);
bars(M, [[427, 117, 20, 5], [457, 129, 5, 2], [462, 164, 8, 3]]);
line('#7c3a86', 'M422 118l3 3M425 118l-3 3');
phases(455, 484, 152, 434);
bars(R, [[466, 121, 4, 2], [467, 150, 7, 2], [467, 154, 3, 1], [467, 157, 17, 2], [467, 160, 16, 2], [467, 163, 3, 1],
  [480, 168, 21, 2], [480, 170, 19, 2], [480, 172, 10, 2], [388, 175, 22, 2], [388, 177, 13, 1], [442, 177, 19, 2]]);
box(G, 462, 167, 5, 8);
breaker(464, 171);
box(G, 411, 171, 6, 7);
breaker(413, 175);
bars(Y, [[469, 170, 7, 2], [418, 170, 22, 2], [418, 174, 6, 2], [381, 208, 19, 1], [548, 188, 24, 2], [548, 191, 25, 2], [460, 185, 2, 2], [443, 193, 19, 2], [459, 197, 3, 2]]);
phases(407, 485, 187, 388);
bars(R, [[416, 184, 28, 2], [416, 188, 4, 1], [416, 193, 10, 2], [416, 198, 3, 1], [388, 201, 13, 2], [388, 205, 7, 1], [420, 201, 13, 2], [420, 204, 8, 1]]);
cable(467, 187, 17);
box(G, 411, 200, 7, 4);
line(G, 'M411 200l7 4');
path('M414.5 206a2.500 2.500 0 1 0 .1 0z', { fill: '#b8d820', stroke: G });

// Main switchboard
box(G, 404, 218, 119, 18, '5 2');
line(G, 'M412 224.500H520');
bars(R, [[407, 222, 9, 1], [526, 218, 7, 1], [526, 220, 10, 2], [526, 224, 12, 2]]);
bars(M, [[463, 222, 7, 1]]);
bars(Y, [[388, 224, 4, 2], [394, 224, 9, 2], [548, 223, 23, 2], [548, 225, 25, 2], [548, 228, 25, 1]]);
phases(399, 531, 241, 379);
phases(399, 491, 295, 378);
[412, 435, 459, 477, 497, 516].forEach((c, i) => {
  line(G, `M${c + .5} 224V${i < 4 ? 318 : 333}`);
  breaker(c + 1, 229);
  bars(Y, [[c + 4, 228, 7, 2]]);
  bars(R, [[c + 1, 231, 15, 2], [c + 1, 233, 8, 2]]);
  cable(c + 2, 241, 10);
});
bars(C, [[460, 249, 11, 2], [479, 249, 11, 2], [460, 303, 11, 2], [479, 303, 11, 2]]);
breaker(478, 258);
box(G, 472, 262, 11, 4);
bars(R, [[475, 263, 4, 2]]);
[459, 477].forEach(c => {
  breaker(c + 1, 276);
  bars(Y, [[c + 4, 275, 7, 2]]);
  bars(G, [[c - 6, 281, 11, 5]]);
  box(DR, c - 6, 279, 13, 8, '2 2');
  line(R, `M${c - 7.5} 282v10`);
  bars(R, [[c - 8, 275, 2, 2], [c - 9, 291, 4, 2], [c + 2, 293, 7, 2], [c + 2, 298, 3, 1], [c + 2, 301, 8, 1], [c + 2, 307, 3, 1]]);
});
bars(Y, [[480, 257, 7, 2], [488, 275, 34, 3], [488, 278, 18, 2], [488, 280, 9, 2], [488, 283, 27, 3], [488, 286, 6, 4]]);
line(G, 'M497 333.500H427M516 333.500H599.500V371');
[[412, 15, 22], [435, 13, 20], [454, 10, 8], [473, 10, 8]].forEach(([x, y, r], i) => {
  bars(M, [[x + 3, 312, 5, 1]]);
  bars(R, [[x - 3, 314, r, 3], [x, 328, 5 + i % 2 * 2, 1]]);
  box(G, x - 2, 315, 7, 2);
  bars(Y, [[x - 1, 318, y, 3], [x - 1, 322, i < 2 ? 12 : 0, 2], [x - 1, 324, 12, 2]]);
});
box('#6b5060', 508, 296, 15, 11, '2 1');
bars(G, [[509, 299, 13, 5]]);
bars(M, [[516, 295, 7, 2]]);
bars(R, [[521, 296, 3, 2], [505, 309, 2, 6], [504, 311, 4, 2]]);
bars(Y, [[498, 301, 7, 2], [526, 296, 9, 3], [526, 299, 19, 2], [526, 302, 13, 4], [526, 306, 20, 2], [526, 308, 5, 3],
  [400, 341, 10, 2], [435, 342, 41, 4], [435, 346, 19, 2], [435, 348, 41, 3], [435, 351, 18, 2]]);

// General notes
bars(R, [[338, 218, 27, 2], [338, 220, 25, 2], [338, 223, 21, 3], [338, 226, 11, 1], [338, 228, 35, 2], [338, 231, 21, 2],
  [338, 233, 24, 2], [338, 236, 20, 1], [338, 238, 7, 1], [338, 240, 25, 2], [338, 242, 22, 2], [338, 244, 28, 3],
  [338, 247, 32, 2], [338, 249, 34, 3], [338, 252, 37, 3], [338, 255, 35, 2], [338, 257, 32, 2], [338, 260, 24, 2],
  [338, 262, 38, 2], [338, 265, 35, 2], [338, 267, 6, 2]]);

// Left feeder
line(DR, 'M424 336.500H284.500V371M427.500 342V413.500H433M431.500 413v10');
box(DR, 421, 331, 11, 11, '2 2');
line(G, 'M430 334q-6 2-2 6');
bars(R, [[429, 423, 5, 2]]);
phases(277, 311, 343, 257);
cable(288, 343, 11);

function board({ x, y, w, cols, color, top, right, label, wires }) {
  box(color, x, y, w, 17, '5 2');
  line(color, `M${cols[0]} ${y + 8.5}H${cols[cols.length - 1]}`);
  breaker(top, y + 4);
  bars(Y, [[top + 3, y + 2, 7, 2]]);
  bars(R, [[cols[0], y + 6, 7, 1], [right, y + 1, 8, 1], [right, y + 3, 6, 2], [right, y + 6, 8, 1], [right, y + 13, 13, 2]]);
  phases(wires[0], wires[1], y + 26, label);
  cols.forEach(c => {
    line(color, `M${c + .5} ${y + 9}V${y + 51}`);
    breaker(c + 1, y + 12);
    bars(Y, [[c + 4, y + 11, 6, 2]]);
    bars(R, [[c + 1, y + 24, 7, 2], [c + 1, y + 29, 4, 1], [c + 1, y + 33, 11, 2], [c + 1, y + 38, 3, 1]]);
  });
}
board({ x: 229, y: 363, w: 127, cols: [232, 252, 273, 292, 310, 328, 350], color: DR, top: 284, right: 364, label: 202, wires: [232, 376] });
line(DR, 'M232 371.500H227.500V387');
bars(R, [[225, 385, 4, 2]]);
[229, 249, 269, 288].forEach(x => {
  bars(R, [[x, 409, 8, 4], [x, 424, 9, 1]]);
  bars(Y, [[x, 413, 6, 2], [x, 417, 19, 2], [x, 419, 9, 1]]);
});
[310, 328].forEach(x => {
  path(`M${x} 409a2.500 2.500 0 1 0 .1 0z`, { fill: '#ffe9a0', stroke: R });
  bars(R, [[x - 3, 423, 4, 3]]);
});
box(DR, 342, 408, 15, 11, '2 1');
bars(DR, [[343, 411, 13, 2], [343, 415, 13, 2]]);
bars(R, [[338, 424, 4, 2], [353, 409, 3, 1]]);
line(DR, 'M340.500 413v10M350.500 420V466');
bars(Y, [[306, 417, 9, 1], [325, 417, 11, 1], [341, 404, 8, 2], [360, 409, 7, 2], [360, 411, 24, 2], [360, 413, 26, 2],
  [360, 416, 14, 2], [360, 418, 20, 2], [360, 420, 7, 2], [206, 414, 9, 2], [217, 414, 2, 2]]);

// Generator / meter group
phases(403, 478, 389, 383);
cable(411, 389, 12);
bars(Y, [[442, 394, 34, 2], [435, 396, 43, 2], [435, 399, 42, 1]]);
box('#b9c020', 433, 407, 44, 12, '6 3');
line(R, 'M433 413.500H452M452.500 407V419M440 409.500h7');
line(C, 'M457 415v-3h3v3zM466.500 409v8M464 413h5M470 416v-4l2 3 2-3v4');

// Lower board
phases(334, 351, 441, 303);
cable(334, 441, 11);
board({ x: 294, y: 466, w: 107, cols: [305, 322, 338, 354, 371, 387], color: DR, top: 350, right: 406, label: 277, wires: [296, 410] });
[306, 322, 338, 355, 371, 387].forEach(c =>
  bars(R, [[c - 10, 517, 8, 3], [c - 3, 519, 8, 4], [c - 4, 535, 5, 1]]));
[302, 318, 334, 350, 366, 383].forEach(x => bars(Y, [[x, 524, 10, 3], [x, 529, 7, 2], [x, 531, 11, 2]]));
bars(Y, [[284, 534, 11, 3]]);

// Right board
phases(584, 614, 343, 577);
cable(605, 343, 12);
const rc = [557, 574, 591, 607, 624, 641, 657];
board({ x: 550, y: 363, w: 115, cols: rc, color: G, top: 599, right: 671, label: 525, wires: [546, 683] });
rc.slice(0, 6).forEach((c, i) => {
  bars(R, [[c - 11, 405, 8, 3], [c - 3, 424, 5, 1]]);
  bars(G, [[c - 3, 410, 9, 3]]);
  bars(Y, [[c - 3, 413, 9, 3], i < 3 ? [c - 3, 417, 11, 5] : [c - 3, 417, 9, 2]]);
});
line(G, 'M657.500 411V417');
box(G, 652, 410, 10, 3);
bars(R, [[666, 410, 13, 1], [654, 418, 6, 2], [655, 432, 5, 1]]);
bars(Y, [[654, 421, 18, 3], [654, 425, 11, 2], [543, 432, 12, 2]]);
bars(C, [[660, 396, 8, 2]]);
```
